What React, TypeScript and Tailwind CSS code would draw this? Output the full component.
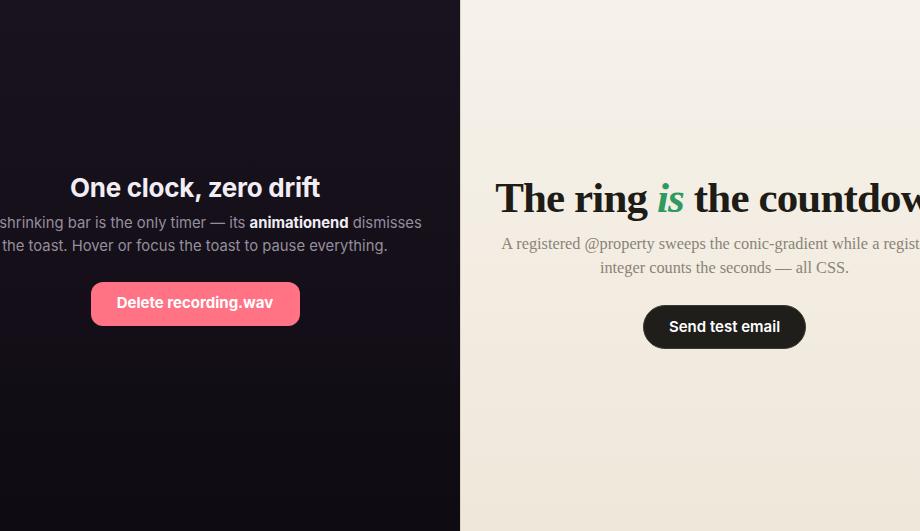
/**
 * Split demo page
 * Left: dark "zero drift" toast demo, right: cream "ring countdown" demo
 */

function DriftPanel() {
  return (
    <section className="flex h-full w-1/2 flex-col items-center justify-center overflow-hidden bg-gradient-to-b from-[#19131f] to-[#0f0b12] pb-[34px] pr-[70px] font-['Inter',sans-serif]">
      <h2 className="whitespace-nowrap text-[26px] font-bold leading-[32px] tracking-[-0.01em] text-[#f2edf4]">
        One clock, zero drift
      </h2>
      <p className="mt-[8px] w-[460px] shrink-0 text-center text-[14.8px] leading-[23px] text-[#968e9e]">
        The shrinking bar is the only timer — its{" "}
        <strong className="font-bold text-[#f2edf4]">animationend</strong> dismisses the toast.
        Hover or focus the toast to pause everything.
      </p>
      <button
        type="button"
        className="mt-[24px] h-[44px] w-[209px] rounded-[12px] bg-[#ff7384] text-[15px] font-bold text-white"
      >
        Delete recording.wav
      </button>
    </section>
  );
}

function RingPanel() {
  return (
    <section className="flex h-full w-1/2 flex-col items-center justify-center overflow-hidden border-l border-[#d9d3c8] bg-gradient-to-b from-[#f6f2ea] to-[#efe7da] pb-[10px] pl-[68px]">
      <h2 className="whitespace-nowrap font-['Liberation_Serif',serif] text-[43px] font-bold leading-[52px] tracking-[-0.02em] text-[#1e1c17]">
        The ring <em className="italic text-[#2e9a5f]">is</em> the countdown
      </h2>
      <p className="mt-[8px] w-[470px] shrink-0 text-center font-['Liberation_Serif',serif] text-[16.3px] leading-[24px] text-[#8a8377]">
        A registered @property sweeps the conic-gradient while a registered integer counts the
        seconds — all CSS.
      </p>
      <button
        type="button"
        className="mt-[25px] h-[44px] w-[163px] rounded-full border border-[#3a3833] bg-[#1f1e1a] pt-px font-['Inter',sans-serif] text-[15px] font-semibold text-white"
      >
        Send test email
      </button>
    </section>
  );
}

export default function App() {
  return (
    <main className="flex h-[531px] w-full overflow-hidden">
      <DriftPanel />
      <RingPanel />
    </main>
  );
}
